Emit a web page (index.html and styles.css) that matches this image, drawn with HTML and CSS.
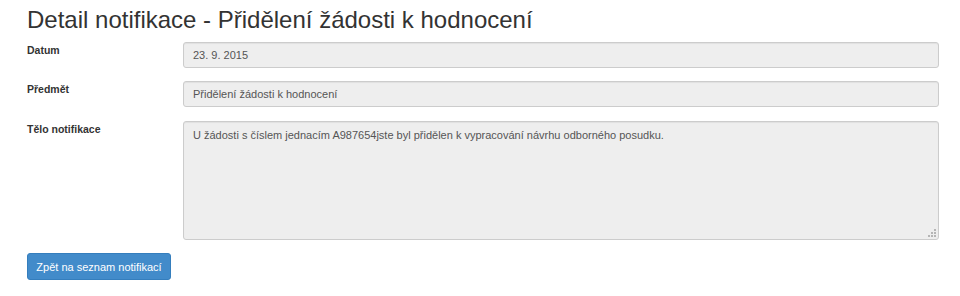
FILE: index.html
```html
<!DOCTYPE html>
<html lang="cs">
<head>
<meta charset="utf-8">
<title>Detail notifikace</title>
<link rel="stylesheet" href="styles.css">
</head>
<body>
<div class="page">
  <h1 class="title">Detail notifikace - Přidělení žádosti k hodnocení</h1>
  <form class="form">
    <div class="row">
      <label class="label">Datum</label>
      <div class="field"><div class="input">23. 9. 2015</div></div>
    </div>
    <div class="row">
      <label class="label">Předmět</label>
      <div class="field"><div class="input">Přidělení žádosti k hodnocení</div></div>
    </div>
    <div class="row">
      <label class="label">Tělo notifikace</label>
      <div class="field">
        <div class="input textarea">U žádosti s číslem jednacím A987654jste byl přidělen k vypracování návrhu odborného posudku.
          <svg class="grip" width="8" height="8" viewBox="0 0 8 8"><g fill="#b5b5b5"><rect x="6" y="0" width="2" height="2"/><rect x="3" y="3" width="2" height="2"/><rect x="6" y="3" width="2" height="2"/><rect x="0" y="6" width="2" height="2"/><rect x="3" y="6" width="2" height="2"/><rect x="6" y="6" width="2" height="2"/></g></svg>
        </div>
      </div>
    </div>
    <div class="actions">
      <button type="button" class="btn">Zpět na seznam notifikací</button>
    </div>
  </form>
</div>
</body>
</html>
```
FILE: styles.css
```css
html, body {
  margin: 0;
  padding: 0;
  background: #ffffff;
}
body {
  font-family: "Liberation Sans", Arial, sans-serif;
  color: #333333;
}
.page {
  padding: 7px 21px 0 27px;
}
.title {
  margin: 0 0 9px 0;
  font-size: 24px;
  font-weight: normal;
  line-height: 26px;
  color: #333333;
}
.form {
  margin: 0;
}
.row {
  display: flex;
  margin-bottom: 13px;
}
.row:nth-child(2) {
  margin-bottom: 14px;
}
.label {
  width: 156px;
  flex: none;
  font-size: 10.5px;
  font-weight: bold;
  padding-top: 2px;
  color: #333333;
}
.field {
  flex: 1;
}
.input {
  position: relative;
  box-sizing: border-box;
  height: 26px;
  border: 1px solid #cccccc;
  border-radius: 3px;
  background: #eeeeee;
  font-size: 11px;
  line-height: 24px;
  padding: 0 9px;
  color: #555555;
  box-shadow: inset 0 1px 1px rgba(0,0,0,0.06);
}
.textarea {
  height: 119px;
  line-height: 14px;
  padding-top: 6px;
}
.grip {
  position: absolute;
  right: 2px;
  bottom: 2px;
}
.actions {
  display: flex;
}
.btn {
  box-sizing: border-box;
  width: 144px;
  height: 27px;
  border: 1px solid #357ebd;
  border-radius: 3px;
  background: #428bca;
  color: #ffffff;
  font-family: "Liberation Sans", Arial, sans-serif;
  font-size: 11px;
  padding: 0;
  cursor: pointer;
}
```
